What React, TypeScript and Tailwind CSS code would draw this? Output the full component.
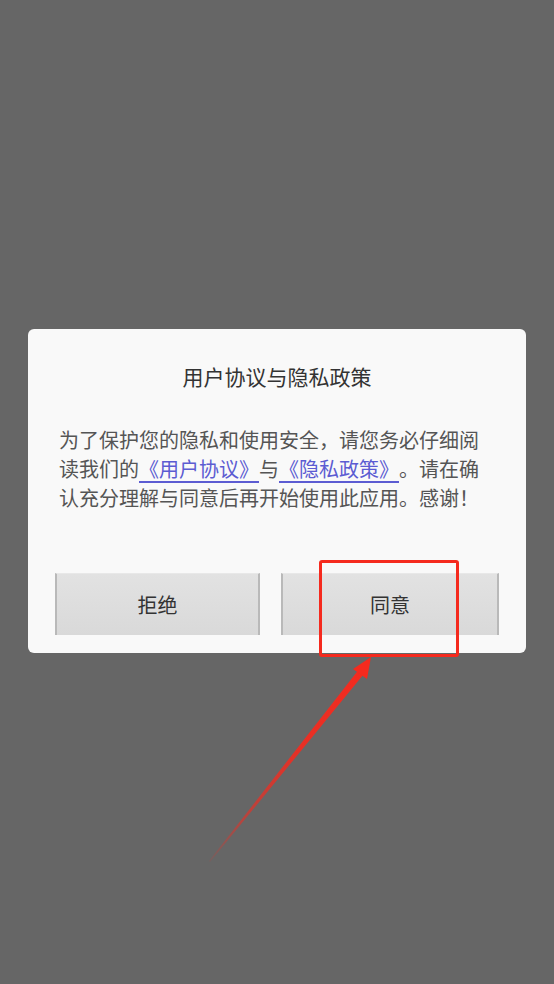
import React from 'react';

const font = { fontFamily: '"Noto Sans CJK SC", "Noto Sans", sans-serif' };

const App: React.FC = () => {
  return (
    <div className="relative h-[984px] w-full overflow-hidden bg-[#666666]" style={font}>
      <div className="px-[28px] pt-[329px]">
        <div className="rounded-[6px] bg-[#f9f9f9] px-[27px] pt-[32px] pb-[18px]">
          <h2 className="text-center text-[21px] leading-[30px] text-[#333333]">用户协议与隐私政策</h2>
          <p className="mt-[34px] px-[4px] text-[20px] leading-[29px] text-[#555555] [text-spacing-trim:space-all]">
            为了保护您的隐私和使用安全，请您务必仔细阅读我们的
            <a className="text-[#5c5cd2] underline underline-offset-[4px]">《用户协议》</a>
            与
            <a className="text-[#5c5cd2] underline underline-offset-[4px]">《隐私政策》</a>
            。请在确认充分理解与同意后再开始使用此应用。感谢！
          </p>
          <div className="mt-[61px] flex gap-[21px]">
            <button className="h-[62px] w-[205px] border-x-2 border-x-[#b9b9b9] border-t border-t-[#e8e8e8] bg-gradient-to-b from-[#e2e2e2] to-[#d9d9d9] text-[20px] text-[#333333]">
              拒绝
            </button>
            <button className="h-[62px] flex-1 border-x-2 border-x-[#b9b9b9] border-t border-t-[#e8e8e8] bg-gradient-to-b from-[#e2e2e2] to-[#d9d9d9] text-[20px] text-[#333333]">
              同意
            </button>
          </div>
        </div>
      </div>

      {/* annotation */}
      <div className="absolute left-[319px] top-[560px] h-[97px] w-[140px] rounded-[3px] border-[3px] border-[#f52a1e]" />
      <svg className="absolute left-0 top-0" width="554" height="984">
        <defs>
          <linearGradient id="tail" x1="210" y1="862" x2="370" y2="658" gradientUnits="userSpaceOnUse">
            <stop offset="0" stopColor="#f52a1e" stopOpacity="0.1" />
            <stop offset="0.2" stopColor="#f52a1e" stopOpacity="0.55" />
            <stop offset="0.55" stopColor="#f52a1e" stopOpacity="0.9" />
            <stop offset="1" stopColor="#f52a1e" stopOpacity="1" />
          </linearGradient>
        </defs>
        <polygon points="210,862 209,861 360,668 365.5,672" fill="url(#tail)" />
        <polygon points="371,657 353,669 367,679" fill="#f52a1e" />
      </svg>
    </div>
  );
};

export default App;
